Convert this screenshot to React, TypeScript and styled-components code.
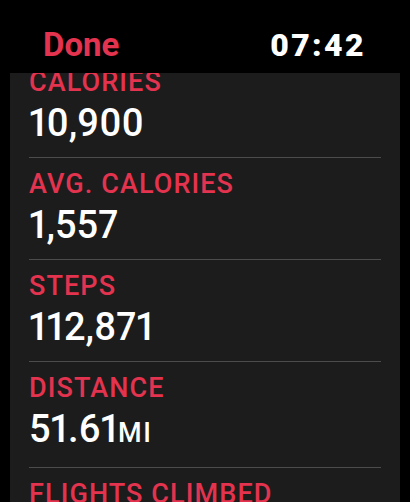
import React from "react";
import styled, { createGlobalStyle } from "styled-components";

const GlobalStyle = createGlobalStyle`
  html, body {
    margin: 0;
    padding: 0;
    background: #000;
  }
  body {
    font-family: Roboto, "Liberation Sans", sans-serif;
    -webkit-font-smoothing: antialiased;
  }
`;

const accent = "#e3334f";

const Screen = styled.div`
  width: 410px;
  height: 502px;
  background: #000;
  display: flex;
  flex-direction: column;
  overflow: hidden;
`;

const Header = styled.header`
  box-sizing: border-box;
  height: 73px;
  flex-shrink: 0;
  padding: 28px 44px 0 43px;
  display: flex;
  justify-content: space-between;
  align-items: baseline;
`;

const DoneButton = styled.button`
  background: none;
  border: none;
  padding: 0;
  margin: 0;
  font-family: inherit;
  font-size: 33px;
  line-height: 1;
  font-weight: 700;
  color: ${accent};
  cursor: pointer;
`;

const Clock = styled.span`
  font-size: 32px;
  line-height: 1;
  font-weight: 900;
  letter-spacing: 2.4px;
  color: #fff;
`;

const Panel = styled.main`
  flex: 1;
  margin: 0 10px;
  background: #1c1c1c;
  overflow: hidden;
`;

const List = styled.ul`
  list-style: none;
  margin: -17px 0 0;
  padding: 0 19px;
`;

const Item = styled.li`
  padding: 13px 0 15px;
  border-bottom: 1px solid #4c4c4c;
`;

const Label = styled.div`
  font-size: 27px;
  line-height: 27px;
  font-weight: 500;
  letter-spacing: 1.1px;
  text-transform: uppercase;
  color: ${accent};
`;

const Value = styled.div`
  margin-top: 8px;
  font-size: 38px;
  line-height: 38px;
  font-weight: 500;
  color: #fff;
  font-variant-numeric: proportional-nums;
`;

const Unit = styled.span`
  font-size: 27px;
  text-transform: uppercase;
  letter-spacing: 1.5px;
`;

type Stat = { label: string; value: string; unit?: string };

const stats: Stat[] = [
  { label: "Calories", value: "10,900" },
  { label: "Avg. Calories", value: "1,557" },
  { label: "Steps", value: "112,871" },
  { label: "Distance", value: "51.61", unit: "mi" },
  { label: "Flights Climbed", value: "84" },
];

export default function App() {
  return (
    <>
      <GlobalStyle />
      <Screen>
        <Header>
          <DoneButton>Done</DoneButton>
          <Clock>07:42</Clock>
        </Header>
        <Panel>
          <List>
            {stats.map((s) => (
              <Item key={s.label}>
                <Label>{s.label}</Label>
                <Value>
                  {s.value}
                  {s.unit && <Unit>{s.unit}</Unit>}
                </Value>
              </Item>
            ))}
          </List>
        </Panel>
      </Screen>
    </>
  );
}
